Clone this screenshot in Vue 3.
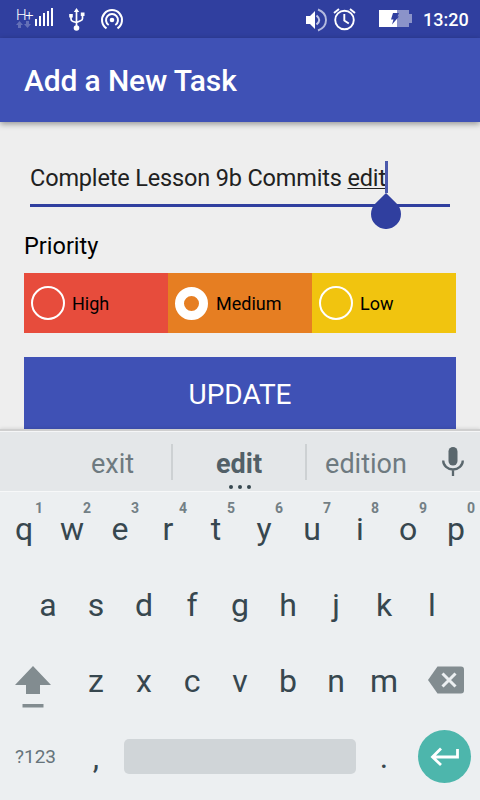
<script setup>
const priorities = [
  { label: 'High', tone: 'high', checked: false },
  { label: 'Medium', tone: 'medium', checked: true },
  { label: 'Low', tone: 'low', checked: false },
]
const topRow = 'qwertyuiop'.split('').map((letter, i) => ({ letter, hint: (i + 1) % 10 }))
const homeRow = 'asdfghjkl'.split('')
const bottomRow = 'zxcvbnm'.split('')
</script>

<template>
  <div class="screen">
    <header class="status">
      <div class="network">
        <span class="hplus">H+</span>
        <svg class="arrows" width="16" height="8" viewBox="0 0 16 8">
          <path d="M3.500 0L7 4H5v3H2V4H0zM11.500 7L8 3h2V0h3v3h2z" fill="#6470b7" />
        </svg>
      </div>
      <svg class="signal" width="18" height="18" viewBox="0 0 18 18" fill="#fff">
        <path d="M0 11h2v7H0zM4 8h2v10H4zM8 5h2v13H8zM12 3h2v15h-2zM16 0h2v18h-2z" />
      </svg>
      <svg class="usb" width="16" height="24" viewBox="0 0 16 24" fill="none" stroke="#fff" stroke-width="1.700">
        <path d="M7.500 3v17M2 8v3q0 2 2 2.500l3.500 1M13.500 7v3.500q0 1.500-1.500 2l-4.500 2" />
        <circle cx="7.500" cy="20" r="2.800" fill="#fff" stroke="none" />
        <path d="M7.500 0l2.700 4H4.800zM.2 6h3.600v3.500H.2zM11.800 4.500h3.700V8h-3.700z" fill="#fff" stroke="none" />
      </svg>
      <svg class="hotspot" width="24" height="24" viewBox="0 0 24 24" fill="none" stroke="#fff" stroke-width="2">
        <path d="M6.500 20.400A10 10 0 1 1 17.500 20.400M8.700 17A6 6 0 1 1 15.300 17" />
        <circle cx="12" cy="12" r="2.300" fill="#fff" stroke="none" />
      </svg>
      <span class="spacer"></span>
      <svg class="volume" width="22" height="24" viewBox="0 0 22 24" fill="none">
        <path d="M0 8h4l5-5v18l-5-5H0z" fill="#fff" />
        <path d="M10.500 7.500q5.500 4.500 0 9" stroke="#c5cae8" stroke-width="2" />
        <path d="M12 1.500q8 3 8 10.500t-8 10.500" stroke="#b4bbdf" stroke-width="1.900" />
      </svg>
      <svg class="alarm" width="24" height="24" viewBox="0 0 24 24" fill="none" stroke="#fff" stroke-width="1.900">
        <circle cx="11.500" cy="13" r="9.300" />
        <path d="M11.300 7v6.500l4.500 3M1 6l5-4M17 2l5 4" />
      </svg>
      <svg class="battery" width="33" height="18" viewBox="0 0 33 18">
        <path d="M18 0h12v4h3v9h-3v4H18z" fill="#8b93c9" />
        <path d="M0 0h18v17H0z" fill="#fff" />
        <path d="M14 3h6l-1.500 3.500h1.500L13 14.500l1.500-5H12z" fill="#303f9f" />
      </svg>
      <span class="clock">13:20</span>
    </header>
    <div class="appbar"><h1>Add a New Task</h1></div>

    <main class="form">
      <div class="field">
        <span class="value">Complete Lesson 9b Commits <span class="composing">edit</span></span>
        <span class="caret">
          <svg class="handle" width="30" height="36" viewBox="0 0 30 36">
            <path d="M15 0L25.600 10.400A15 15 0 1 1 4.400 10.400z" fill="#303f9f" />
          </svg>
        </span>
      </div>
      <div class="label">Priority</div>
      <div class="priorities">
        <div v-for="p in priorities" :key="p.label" class="priority" :class="p.tone">
          <span class="radio" :class="{ checked: p.checked }"></span>
          <span>{{ p.label }}</span>
        </div>
      </div>
      <div class="update">UPDATE</div>
    </main>

    <section class="keyboard">
      <div class="suggestions">
        <span class="word first">exit</span>
        <span class="word main">edit<span class="dots"><i></i><i></i><i></i></span></span>
        <span class="word last">edition</span>
        <svg class="mic" width="22" height="30" viewBox="0 0 22 30" fill="none">
          <rect x="6.500" y="0" width="9" height="18.500" rx="4.500" fill="#5a676d" />
          <path d="M1.200 13.500a9.800 9 0 0 0 19.600 0M11 22.500V29" stroke="#5a676d" stroke-width="2.300" />
        </svg>
      </div>
      <div class="row top">
        <span v-for="k in topRow" :key="k.letter" class="key">{{ k.letter }}<sup class="hint">{{ k.hint }}</sup></span>
      </div>
      <div class="row home">
        <span v-for="k in homeRow" :key="k" class="key">{{ k }}</span>
      </div>
      <div class="row">
        <span class="shift">
          <svg width="36" height="42" viewBox="0 0 36 42" fill="#828c90">
            <path d="M18 0l18 19H25v9H11v-9H0z" />
            <path d="M7.500 38h21v3.500h-21z" />
          </svg>
        </span>
        <span v-for="k in bottomRow" :key="k" class="key">{{ k }}</span>
        <span class="delete">
          <svg width="36" height="28" viewBox="0 0 36 28">
            <path d="M9.500.500H33q3 0 3 3v21q0 3-3 3H9.500L0 14z" fill="#828c90" />
            <path d="M14.500 7.500l13 13M27.500 7.500l-13 13" stroke="#eceff1" stroke-width="3" />
          </svg>
        </span>
      </div>
      <div class="row bottom">
        <span class="symbols">?123</span>
        <span class="key">,</span>
        <span class="space"></span>
        <span class="key period">.</span>
        <span class="enter">
          <svg width="30" height="20" viewBox="0 0 30 20" fill="none" stroke="#fff" stroke-width="2.800">
            <path d="M27.500 2v8H3M11 1.500L2.500 10l8.500 8" />
          </svg>
        </span>
      </div>
    </section>
  </div>
</template>

<style>
body { background: #eee; }
</style>

<style scoped>
.screen {
  width: 480px;
  height: 800px;
  display: flex;
  flex-direction: column;
  overflow: hidden;
  background: #eee;
  font-family: Roboto, "Liberation Sans", sans-serif;
}
.screen svg { display: block; flex: none; }
.status {
  flex: none;
  height: 38px;
  display: flex;
  align-items: flex-start;
  background: #303f9f;
  color: #fff;
}
.network { width: 16px; margin: 8px 0 0 16px; }
.hplus {
  display: block;
  height: 13px;
  font-size: 15px;
  line-height: 14px;
  font-weight: 300;
  letter-spacing: -1.5px;
  white-space: nowrap;
}
.signal { margin: 8px 0 0 3px; }
.usb { margin: 8px 0 0 16px; }
.hotspot { margin: 8px 0 0 15px; }
.spacer { flex: 1; }
.volume { margin-top: 8px; }
.alarm { margin: 7px 0 0 5px; }
.battery { margin: 10px 0 0 22px; }
.clock { width: 57px; margin-left: 11px; font-size: 18px; line-height: 39px; font-weight: 500; }
.appbar {
  flex: none;
  z-index: 1;
  height: 84px;
  box-sizing: border-box;
  display: flex;
  align-items: center;
  padding: 2px 0 0 24px;
  background: #3f51b5;
  box-shadow: 0 2px 6px rgba(0, 0, 0, 0.38);
}
h1 { margin: 0; color: #fff; font-size: 30px; line-height: 36px; font-weight: 500; letter-spacing: -0.15px; }
.form { height: 307px; flex: none; padding: 32px 24px 0; box-sizing: border-box; overflow: hidden; }
.field {
  display: flex;
  align-items: center;
  height: 50px;
  margin: 0 6px;
  border-bottom: 3px solid #303f9f;
  color: #212121;
  font-size: 23.500px;
  line-height: 48px;
  white-space: nowrap;
}
.value { margin-top: -2px; letter-spacing: -0.16px; }
.composing { text-decoration: underline; text-decoration-thickness: 1px; text-underline-offset: 2px; text-decoration-skip-ink: none; }
.caret { position: relative; width: 3px; height: 32px; margin: -4px 0 0 -0.5px; background: #4b59ac; }
.handle { position: absolute; left: -14px; top: 32px; }
.label { margin-top: 23px; height: 32px; font-size: 23.500px; line-height: 32px; color: #000; }
.priorities { display: grid; grid-template-columns: repeat(3, 1fr); height: 60px; margin-top: 11px; }
.priority { display: flex; align-items: center; gap: 7px; padding-left: 7px; font-size: 18px; color: #000; }
.high { background: #e74c3c; }
.medium { background: #e67e22; }
.low { background: #f1c40f; }
.radio { box-sizing: border-box; width: 34px; height: 34px; border: 2px solid #fff; border-radius: 50%; }
.radio.checked { width: 33px; height: 33px; margin-right: 1px; border-width: 9.5px; }
.update { height: 76px; margin-top: 24px; background: #3f51b5; color: #fff; font-size: 28px; line-height: 76px; text-align: center; }
.keyboard { flex: none; height: 369px; margin-top: 2px; background: #eceff1; box-shadow: 0 -1px 0 1px #cfcfcf, 0 -2px 4px rgba(0, 0, 0, 0.15); z-index: 1; color: #37474f; }
.suggestions {
  height: 61px;
  box-sizing: border-box;
  display: flex;
  align-items: center;
  border-top: 1px solid #f5f6f7;
  border-bottom: 1px solid #f7f8f9;
  background: #e4e7e9;
  font-size: 27px;
  line-height: 36px;
  color: #6e7a80;
}
.word { position: relative; display: block; height: 36px; text-align: center; margin-top: 4px; }
.first { width: 119px; padding-left: 53px; }
.main { width: 134px; color: #526067; font-weight: 700; }
.main::before, .main::after { content: ""; position: absolute; top: -2px; width: 2px; height: 36px; background: #cdd1d3; }
.main::before { left: -1px; }
.main::after { right: -1px; }
.last { width: 120px; }
.dots { position: absolute; left: 1px; right: 0; bottom: -7px; display: flex; justify-content: center; gap: 5px; }
.dots i { width: 4px; height: 4px; border-radius: 50%; background: #37474f; }
.mic { margin: 1px 0 0 16px; }
.row { display: flex; align-items: center; height: 76px; }
.top { height: 75px; }
.home { padding-left: 24px; }
.key { position: relative; width: 48px; font-size: 32px; line-height: 76px; text-align: center; }
.top .key { margin-top: -2px; }
.hint { position: absolute; left: 24px; top: 8px; width: 30px; font-size: 14px; line-height: 18px; font-weight: 700; color: #737f85; }
.shift { width: 57px; padding: 11px 0 0 15px; }
.delete { padding-left: 20px; }
.delete svg { margin-top: -2px; }
.bottom { height: 75px; }
.symbols { width: 71px; margin-right: 1px; text-align: center; font-size: 19px; line-height: 22px; color: #66747b; }
.space { width: 232px; height: 35px; margin-left: 4px; border-radius: 5px; background: #d0d5d8; margin-top: -1px; }
.period { margin-left: 4px; }
.enter { display: flex; align-items: center; justify-content: center; width: 53px; height: 53px; margin-left: 10px; border-radius: 50%; background: #4db6ac; }
</style>
